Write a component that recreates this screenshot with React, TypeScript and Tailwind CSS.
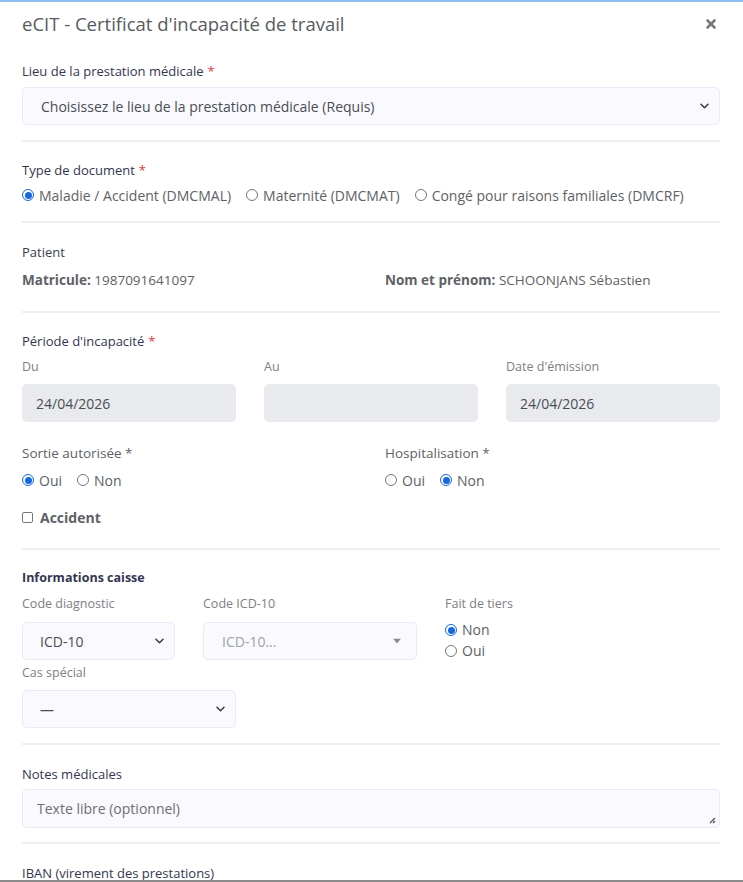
import { X } from 'lucide-react'

const font = "font-['Open_Sans','Liberation_Sans',sans-serif]"

function Chevron() {
  return (
    <svg width="9" height="6" viewBox="0 0 9 6" className="absolute right-[10px] top-1/2 -translate-y-1/2">
      <path d="M1 1.2l3.5 3.5 3.5-3.5" fill="none" stroke="#3a3a3a" strokeWidth="1.5" strokeLinecap="round" strokeLinejoin="round" />
    </svg>
  )
}

function Req() {
  return <span className="text-[#e0393e] ml-1">*</span>
}

function Radio({ label, checked }: { label: string; checked?: boolean }) {
  return (
    <label className="flex items-center gap-[5px] whitespace-nowrap shrink-0">
      {checked ? (
        <span className="w-[12px] h-[12px] rounded-full border border-[#1668dc] flex items-center justify-center">
          <span className="w-[7px] h-[7px] rounded-full bg-[#1668dc]" />
        </span>
      ) : (
        <span className="w-[12px] h-[12px] rounded-full border border-[#767676]" />
      )}
      <span>{label}</span>
    </label>
  )
}

function Hr({ className = '' }: { className?: string }) {
  return <div className={`h-[2px] bg-[#efeff2] ${className}`} />
}

const label = 'text-[13px] leading-[20px] font-medium text-[#343651]'
const sub = 'text-[12.5px] leading-[20px] text-[#7d8085]'
const field = 'relative rounded-[5px] border border-[#eae9f7] bg-[#f9f9fe] flex items-center text-[14px]'

export default function App() {
  return (
    <div className={`${font} w-[743px] h-[882px] bg-white overflow-hidden border-t-2 border-[#8fbdf0] border-b-2 border-b-[#8a8a8a] flex flex-col`}>
      {/* Header */}
      <div className="flex items-center justify-between pl-[22px] pr-[25px] h-[44px] shrink-0">
        <h1 className="text-[18.5px] text-[#575b62]">eCIT - Certificat d'incapacité de travail</h1>
        <X size={14} strokeWidth={4.5} className="text-[#7a7a7a]" />
      </div>

      <div className="pl-[22px] pr-[23px] flex flex-col">
        {/* Lieu */}
        <div className={`mt-[15px] ${label}`}>Lieu de la prestation médicale<Req /></div>
        <div className={`mt-[6px] h-[38px] pl-[18px] text-[#4a4d53] ${field}`}>
          Choisissez le lieu de la prestation médicale (Requis)
          <Chevron />
        </div>
        <Hr className="mt-[15px]" />

        {/* Type de document */}
        <div className={`mt-[18px] ${label}`}>Type de document<Req /></div>
        <div className="mt-[5px] h-[20px] flex items-center gap-[15px] text-[14px] text-[#5e6166]">
          <Radio label="Maladie / Accident (DMCMAL)" checked />
          <Radio label="Maternité (DMCMAT)" />
          <Radio label="Congé pour raisons familiales (DMCRF)" />
        </div>
        <Hr className="mt-[16px]" />

        {/* Patient */}
        <div className="mt-[19px] text-[13px] leading-[20px] font-medium text-[#3c3e4a]">Patient</div>
        <div className="mt-[8px] grid grid-cols-2 gap-[28px] text-[13.5px] leading-[20px] text-[#5e6166]">
          <div><span className="font-bold">Matricule:</span> 1987091641097</div>
          <div><span className="font-bold">Nom et prénom:</span> SCHOONJANS Sébastien</div>
        </div>
        <Hr className="mt-[21px]" />

        {/* Période */}
        <div className={`mt-[18px] ${label}`}>Période d'incapacité<Req /></div>
        <div className="mt-[6px] grid grid-cols-3 gap-[28px]">
          {[
            ['Du', '24/04/2026'],
            ['Au', ''],
            ["Date d'émission", '24/04/2026'],
          ].map(([l, v]) => (
            <div key={l}>
              <div className={sub}>{l}</div>
              <div className="mt-[7px] h-[38px] rounded-[5px] bg-[#e8eaee] flex items-center pl-[14px] text-[14px] text-[#4a4d53]">{v}</div>
            </div>
          ))}
        </div>

        <div className="mt-[21px] grid grid-cols-2 gap-[28px] text-[#5e6166]">
          {[
            ['Sortie autorisée *', true],
            ['Hospitalisation *', false],
          ].map(([t, oui]) => (
            <div key={t as string}>
              <div className="text-[13.5px] leading-[20px]">{t}</div>
              <div className="mt-[7px] h-[20px] flex items-center gap-[15px] text-[14px]">
                <Radio label="Oui" checked={!!oui} />
                <Radio label="Non" checked={!oui} />
              </div>
            </div>
          ))}
        </div>

        <label className="mt-[17px] h-[20px] flex items-center gap-[7px] text-[14px] font-bold text-[#5e6166]">
          <span className="w-[11px] h-[11px] rounded-[2px] border border-[#767676]" />
          Accident
        </label>
        <Hr className="mt-[21px]" />

        {/* Informations caisse */}
        <div className="mt-[18px] text-[12.5px] leading-[20px] font-bold text-[#343651]">Informations caisse</div>
        <div className="mt-[6px] grid grid-cols-[153px_214px_1fr] gap-x-[28px]">
          <div>
            <div className={sub}>Code diagnostic</div>
            <div className={`mt-[8px] h-[38px] pl-[17px] text-[#4a4d53] ${field}`}>
              ICD-10
              <Chevron />
            </div>
          </div>
          <div>
            <div className={sub}>Code ICD-10</div>
            <div className={`mt-[8px] h-[38px] pl-[18px] text-[#a0a2a6] ${field}`}>
              ICD-10...
              <svg width="8" height="5" viewBox="0 0 8 5" className="absolute right-[15px] top-1/2 -translate-y-1/2">
                <path d="M0 0h8L4 5z" fill="#888" />
              </svg>
            </div>
          </div>
          <div>
            <div className={sub}>Fait de tiers</div>
            <div className="mt-[6px] flex flex-col gap-[1px] text-[14px] leading-[20px] text-[#5e6166]">
              <Radio label="Non" checked />
              <Radio label="Oui" />
            </div>
          </div>
        </div>
        <div className={`mt-[2px] ${sub}`}>Cas spécial</div>
        <div className={`mt-[7px] w-[214px] h-[38px] pl-[17px] text-[#4a4d53] ${field}`}>
          —
          <Chevron />
        </div>
        <Hr className="mt-[15px]" />

        {/* Notes */}
        <div className={`mt-[19px] ${label}`}>Notes médicales</div>
        <div className={`mt-[5px] h-[39px] pl-[14px] text-[#6d7075] ${field}`}>
          Texte libre (optionnel)
          <svg width="7" height="7" viewBox="0 0 7 7" className="absolute right-[3px] bottom-[3px]">
            <path d="M6 1L1 6M6 4L4 6" stroke="#555" strokeWidth="1.2" />
          </svg>
        </div>
        <Hr className="mt-[14px]" />

        <div className="mt-[21px] text-[13px] leading-[16px] font-medium text-[#343651]">IBAN (virement des prestations)</div>
      </div>
    </div>
  )
}
